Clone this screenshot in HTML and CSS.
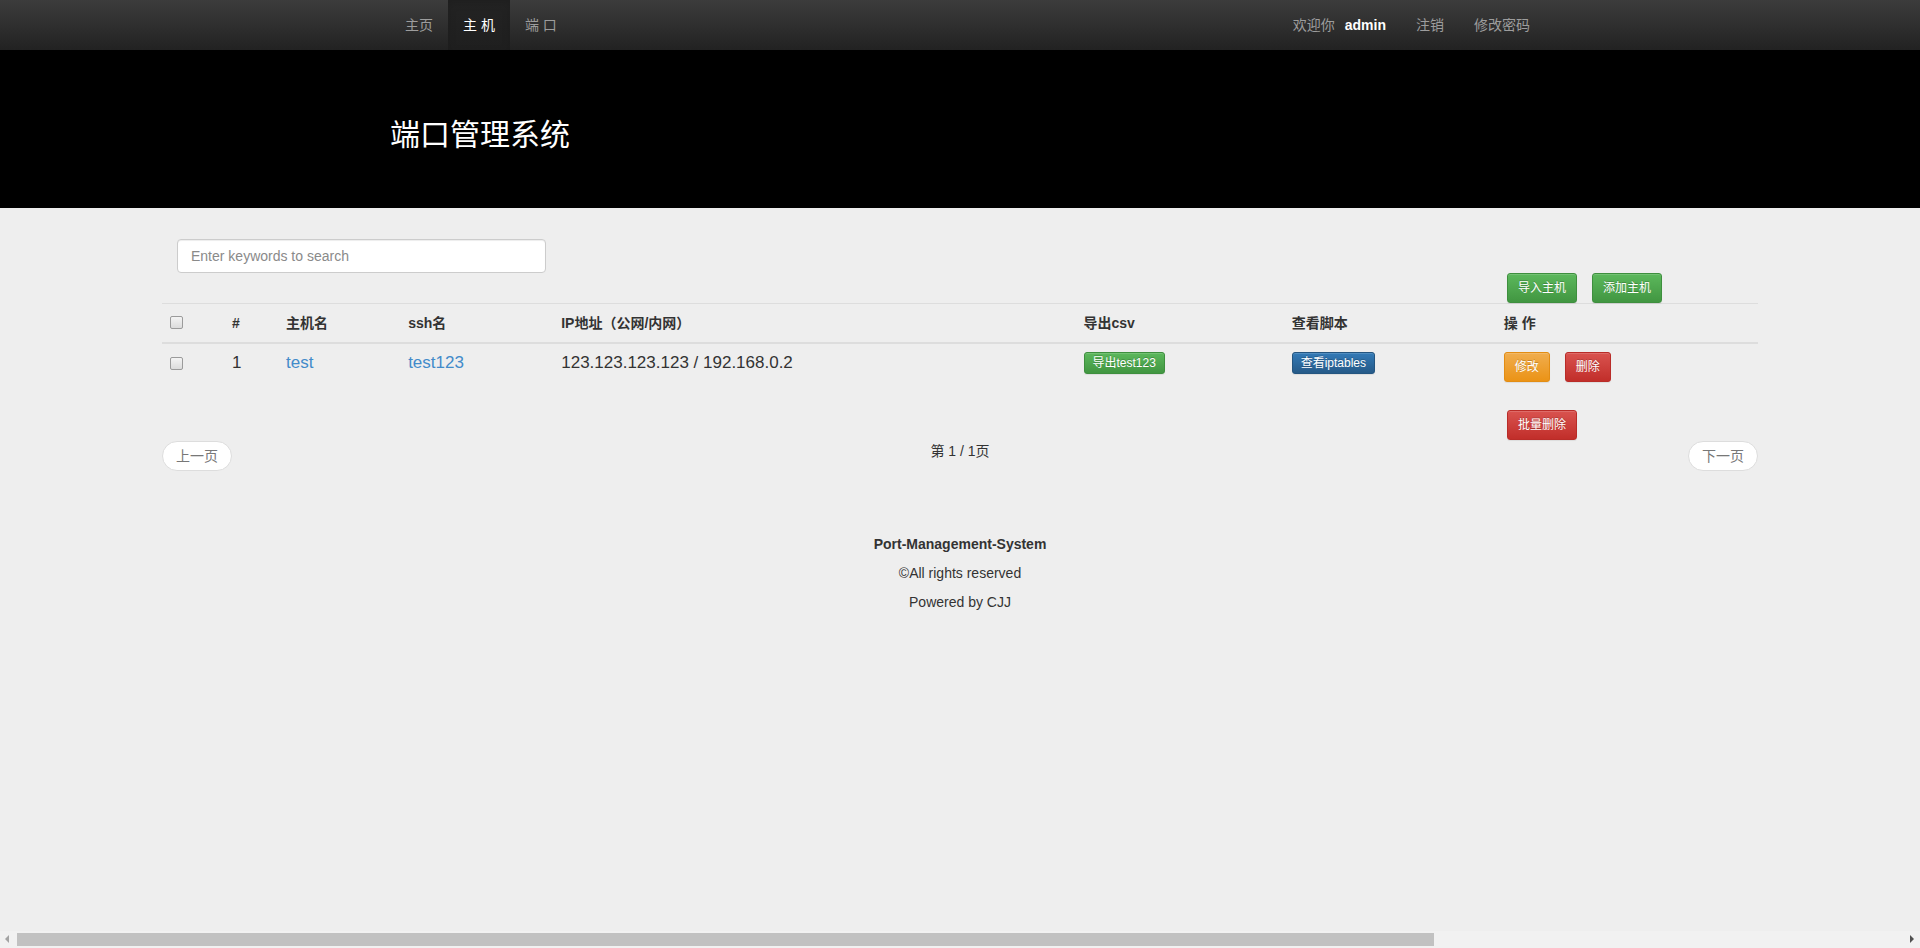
FILE: index.html
```html
<!DOCTYPE html>
<html lang="zh-CN">
<head>
<meta charset="utf-8">
<title>端口管理系统</title>
<link rel="stylesheet" href="styles.css">
</head>
<body>
<nav class="navbar">
  <div class="nav-inner">
    <ul class="nav">
      <li><a href="#">主页</a></li>
      <li class="active"><a href="#">主 机</a></li>
      <li><a href="#">端 口</a></li>
    </ul>
    <ul class="nav">
      <li><a href="#">欢迎你<b class="user">admin</b></a></li>
      <li><a href="#">注销</a></li>
      <li><a href="#">修改密码</a></li>
    </ul>
  </div>
</nav>

<header class="jumbo">
  <div class="jumbo-inner">
    <h1>端口管理系统</h1>
  </div>
</header>

<main class="main">
  <div class="search-row">
    <input class="search" type="text" placeholder="Enter keywords to search">
  </div>
  <div class="top-actions">
    <button class="btn btn-success">导入主机</button>
    <button class="btn btn-success">添加主机</button>
  </div>
  <table class="table">
    <thead>
      <tr>
        <th class="c-chk"><span class="chk"></span></th>
        <th class="c-num">#</th>
        <th class="c-host">主机名</th>
        <th class="c-ssh">ssh名</th>
        <th class="c-ip">IP地址（公网/内网）</th>
        <th class="c-csv">导出csv</th>
        <th class="c-script">查看脚本</th>
        <th class="c-ops">操 作</th>
      </tr>
    </thead>
    <tbody>
      <tr>
        <td><span class="chk chk-row"></span></td>
        <td>1</td>
        <td><a class="link" href="#">test</a></td>
        <td><a class="link" href="#">test123</a></td>
        <td>123.123.123.123 / 192.168.0.2</td>
        <td><button class="btn btn-xs btn-success">导出test123</button></td>
        <td><button class="btn btn-xs btn-primary">查看iptables</button></td>
        <td>
          <div class="ops">
            <button class="btn btn-warning">修改</button>
            <button class="btn btn-danger">删除</button>
          </div>
        </td>
      </tr>
    </tbody>
  </table>
  <div class="bulk">
    <button class="btn btn-danger">批量删除</button>
  </div>
  <div class="pager">
    <a class="pager-btn" href="#">上一页</a>
    <span class="page-info">第 1 / 1页</span>
    <a class="pager-btn" href="#">下一页</a>
  </div>
</main>

<footer class="footer">
  <p class="footer-title">Port-Management-System</p>
  <p>©All rights reserved</p>
  <p>Powered by CJJ</p>
</footer>

<div class="hscroll">
  <span class="arrow arrow-left"></span>
  <span class="thumb"></span>
  <span class="arrow arrow-right"></span>
</div>
</body>
</html>
```

FILE: styles.css
```css
* { box-sizing: border-box; }

html, body {
  margin: 0;
  padding: 0;
}

body {
  background: #eeeeee;
  color: #333;
  font-family: "Liberation Sans", "Noto Sans CJK SC", sans-serif;
  font-size: 14px;
  line-height: 20px;
  min-height: 948px;
}

a { text-decoration: none; }

/* Navbar */
.navbar {
  height: 50px;
  background-image: linear-gradient(to bottom, #3c3c3c 0, #222 100%);
}

.nav-inner {
  width: 1170px;
  margin: 0 auto;
  padding-left: 15px;
  display: flex;
  justify-content: space-between;
}

.nav {
  list-style: none;
  margin: 0;
  padding: 0;
  display: flex;
}

.nav a {
  display: block;
  padding: 0 15px;
  line-height: 50px;
  color: #9d9d9d;
  font-size: 14px;
}

.nav .active a {
  color: #fff;
  background-image: linear-gradient(to bottom, #232323 0, #1f1f1f 100%);
  box-shadow: inset 0 3px 9px rgba(0, 0, 0, .12);
}

.user {
  color: #fff;
  font-weight: bold;
  margin-left: 10px;
}

/* Jumbotron */
.jumbo {
  background: #000;
  height: 158px;
}

.jumbo-inner {
  width: 1170px;
  margin: 0 auto;
  padding: 68px 15px 0;
}

.jumbo h1 {
  margin: 0;
  color: #fff;
  font-size: 30px;
  font-weight: 400;
  line-height: 33px;
}

/* Main */
.main {
  width: 1596px;
  margin: 0 auto;
}

.search-row {
  padding: 31px 0 0 15px;
}

.search {
  display: block;
  width: 369px;
  height: 34px;
  padding: 6px 13px;
  font-family: inherit;
  font-size: 14px;
  color: #555;
  background: #fff;
  border: 1px solid #ccc;
  border-radius: 4px;
  box-shadow: inset 0 1px 1px rgba(0, 0, 0, .075);
  outline: none;
}

.search::placeholder { color: #8a8a8a; }

.top-actions {
  display: flex;
  gap: 15px;
  padding-left: 1345px;
}

/* Buttons */
.btn {
  display: inline-block;
  margin: 0;
  padding: 5px 10px;
  font-family: inherit;
  font-size: 12px;
  line-height: 18px;
  color: #fff;
  border: 1px solid transparent;
  border-radius: 3px;
  text-shadow: 0 -1px 0 rgba(0, 0, 0, .2);
  box-shadow: inset 0 1px 0 rgba(255, 255, 255, .15), 0 1px 1px rgba(0, 0, 0, .075);
  cursor: pointer;
  white-space: nowrap;
}

.btn-xs {
  padding: 1px 8px;
}

.btn-success {
  background-image: linear-gradient(to bottom, #5cb85c 0, #419641 100%);
  border-color: #3e8f3e;
}

.btn-primary {
  background-image: linear-gradient(to bottom, #337ab7 0, #265a88 100%);
  border-color: #245580;
}

.btn-warning {
  background-image: linear-gradient(to bottom, #f0ad4e 0, #eb9316 100%);
  border-color: #e38d13;
}

.btn-danger {
  background-image: linear-gradient(to bottom, #d9534f 0, #c12e2a 100%);
  border-color: #b92c28;
}

/* Table */
.table {
  width: 100%;
  table-layout: fixed;
  border-collapse: collapse;
  border-spacing: 0;
}

.table th {
  text-align: left;
  font-weight: bold;
  padding: 9px 8px;
  line-height: 20px;
  vertical-align: top;
  border-top: 1px solid #ddd;
  border-bottom: 2px solid #ddd;
}

.table td {
  padding: 8px;
  font-size: 17px;
  line-height: 22px;
  vertical-align: top;
}

.c-chk { width: 62px; }
.c-num { width: 54px; }
.c-host { width: 122px; }
.c-ssh { width: 153px; }
.c-ip { width: 522px; }
.c-csv { width: 208px; }
.c-script { width: 212px; }
.c-ops { width: 262px; }

.chk {
  display: block;
  width: 13px;
  height: 13px;
  margin-top: 3px;
  border: 1px solid #9b9b9b;
  border-radius: 2px;
  background-image: linear-gradient(to bottom, #f4f4f4 0, #dcdcdc 100%);
}

.chk-row { margin-top: 5px; }

.link { color: #428bca; }

.table td .btn {
  vertical-align: top;
}

.ops {
  display: flex;
  gap: 15px;
}

/* Bulk + pager */
.bulk {
  margin-top: 20px;
  padding-left: 1345px;
}

.pager {
  margin-top: 1px;
  display: flex;
  justify-content: space-between;
  align-items: flex-start;
}

.pager-btn {
  display: block;
  padding: 4px 13px;
  line-height: 20px;
  color: #777;
  background: #fff;
  border: 1px solid #ddd;
  border-radius: 15px;
}

.page-info {
  line-height: 20px;
  color: #333;
}

/* Footer */
.footer {
  margin-top: 63px;
  text-align: center;
  color: #333;
}

.footer p {
  margin: 0 0 9px;
  line-height: 20px;
}

.footer-title {
  font-weight: bold;
}

/* Horizontal scrollbar of the window */
.hscroll {
  position: fixed;
  left: 0;
  right: 0;
  bottom: 0;
  height: 17px;
  background: #f1f1f1;
}

.thumb {
  position: absolute;
  left: 17px;
  top: 2px;
  width: 1417px;
  height: 13px;
  background: #c1c1c1;
}

.arrow {
  position: absolute;
  top: 4px;
  width: 0;
  height: 0;
  border-top: 4px solid transparent;
  border-bottom: 4px solid transparent;
}

.arrow-left {
  left: 5px;
  border-right: 4px solid #a3a3a3;
}

.arrow-right {
  right: 6px;
  border-left: 4px solid #505050;
}
```
